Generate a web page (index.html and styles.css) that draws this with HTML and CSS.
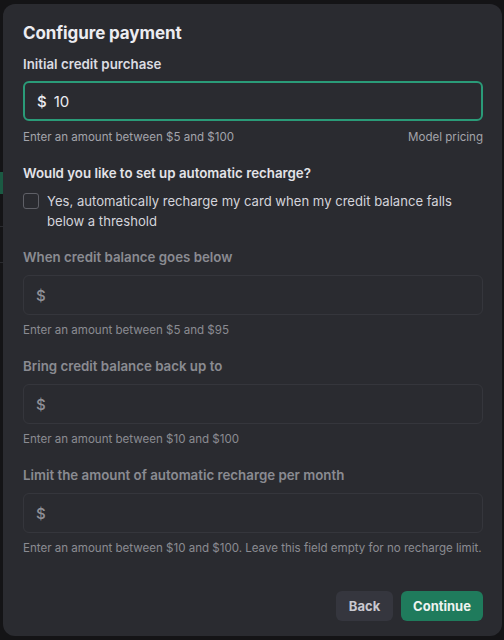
FILE: index.html
```html
<!DOCTYPE html>
<html>
<head>
<meta charset="utf-8">
<link rel="stylesheet" href="styles.css">
</head>
<body>
<div class="backdrop">
  <div class="bg-chip"></div>
  <div class="bg-line l1"></div>
  <div class="bg-line l2"></div>
</div>
<div class="dialog">
  <h1 class="title">Configure payment</h1>
  <div class="label">Initial credit purchase</div>
  <div class="input active"><span class="cur">$</span><span class="val">10</span></div>
  <div class="help-row">
    <span class="help">Enter an amount between $5 and $100</span>
    <span class="help">Model pricing</span>
  </div>
  <div class="label q">Would you like to set up automatic recharge?</div>
  <div class="check-row">
    <span class="box"></span>
    <span class="check-text">Yes, automatically recharge my card when my credit balance falls below a threshold</span>
  </div>
  <div class="label dim first-dim">When credit balance goes below</div>
  <div class="input disabled"><span class="cur">$</span></div>
  <div class="help dim-help">Enter an amount between $5 and $95</div>
  <div class="label dim">Bring credit balance back up to</div>
  <div class="input disabled"><span class="cur">$</span></div>
  <div class="help dim-help">Enter an amount between $10 and $100</div>
  <div class="label dim">Limit the amount of automatic recharge per month</div>
  <div class="input disabled"><span class="cur">$</span></div>
  <div class="help dim-help">Enter an amount between $10 and $100. Leave this field empty for no recharge limit.</div>
  <div class="actions">
    <button class="btn back">Back</button>
    <button class="btn primary">Continue</button>
  </div>
</div>
</body>
</html>
```
FILE: styles.css
```css
* { box-sizing: border-box; }
html, body { margin: 0; padding: 0; }
body {
  width: 504px;
  height: 640px;
  background: #141416;
  font-family: Inter, "Noto Sans", sans-serif;
  position: relative;
  overflow: hidden;
  padding: 4px 2px 4px 3px;
}
.backdrop { position: absolute; inset: 0; }
.bg-chip { position: absolute; left: 0; top: 172px; width: 8px; height: 22px; background: #1b5a43; }
.bg-line { position: absolute; left: 0; width: 8px; height: 1px; background: #2a2b2f; }
.l1 { top: 226px; }
.l2 { top: 262px; }
.dialog {
  position: relative;
  width: 499px;
  height: 632px;
  background: #2a2b30;
  border-radius: 12px;
  padding: 17px 19px 16px 20px;
  display: flex;
  flex-direction: column;
}
.title {
  margin: 0;
  font-size: 17px;
  line-height: 24px;
  font-weight: 700;
  color: #ececf1;
  letter-spacing: -0.1px;
}
.label {
  font-size: 13.3px;
  line-height: 20px;
  font-weight: 600;
  color: #dcdce2;
  margin-top: 9px;
}
.input {
  margin-top: 7px;
  height: 40px;
  border-radius: 6px;
  display: flex;
  align-items: center;
  padding-left: 12px;
  font-size: 15px;
}
.cur { font-weight: 500; }
.input.active {
  border: 2px solid #2a9b78;
  color: #ececf1;
}
.input.active .cur { margin-right: 7px; }
.input.disabled {
  border: 1px solid #35363c;
  color: #8f9097;
  padding-left: 12px;
  height: 40px;
  margin-top: 8px;
}
.help-row {
  margin-top: 8px;
  display: flex;
  justify-content: space-between;
}
.help {
  font-size: 11.55px;
  line-height: 16px;
  color: #a3a4ab;
  white-space: nowrap;
}
.label.q { margin-top: 18px; color: #e3e3e8; }
.check-row {
  margin-top: 8px;
  display: flex;
  align-items: flex-start;
  gap: 8px;
}
.box {
  flex: none;
  width: 16px;
  height: 16px;
  margin-top: 2px;
  border: 1px solid #5f6067;
  border-radius: 3px;
}
.check-text {
  font-size: 13.1px;
  line-height: 20px;
  color: #d4d4db;
}
.label.dim { color: #8a8b92; margin-top: 18px; }
.label.first-dim { margin-top: 16px; }
.dim-help { margin-top: 7px; color: #8a8b92; }
.actions {
  margin-top: auto;
  display: flex;
  justify-content: flex-end;
  gap: 8px;
  margin-bottom: -1px;
}
.btn {
  font-family: inherit;
  font-size: 13px;
  font-weight: 700;
  height: 30px;
  border: none;
  border-radius: 6px;
  padding: 0 12px;
  cursor: pointer;
}
.back { background: #35363e; color: #c8c8d0; width: 57px; }
.primary { background: #1f7b5c; color: #eef3f0; width: 82px; }
```
